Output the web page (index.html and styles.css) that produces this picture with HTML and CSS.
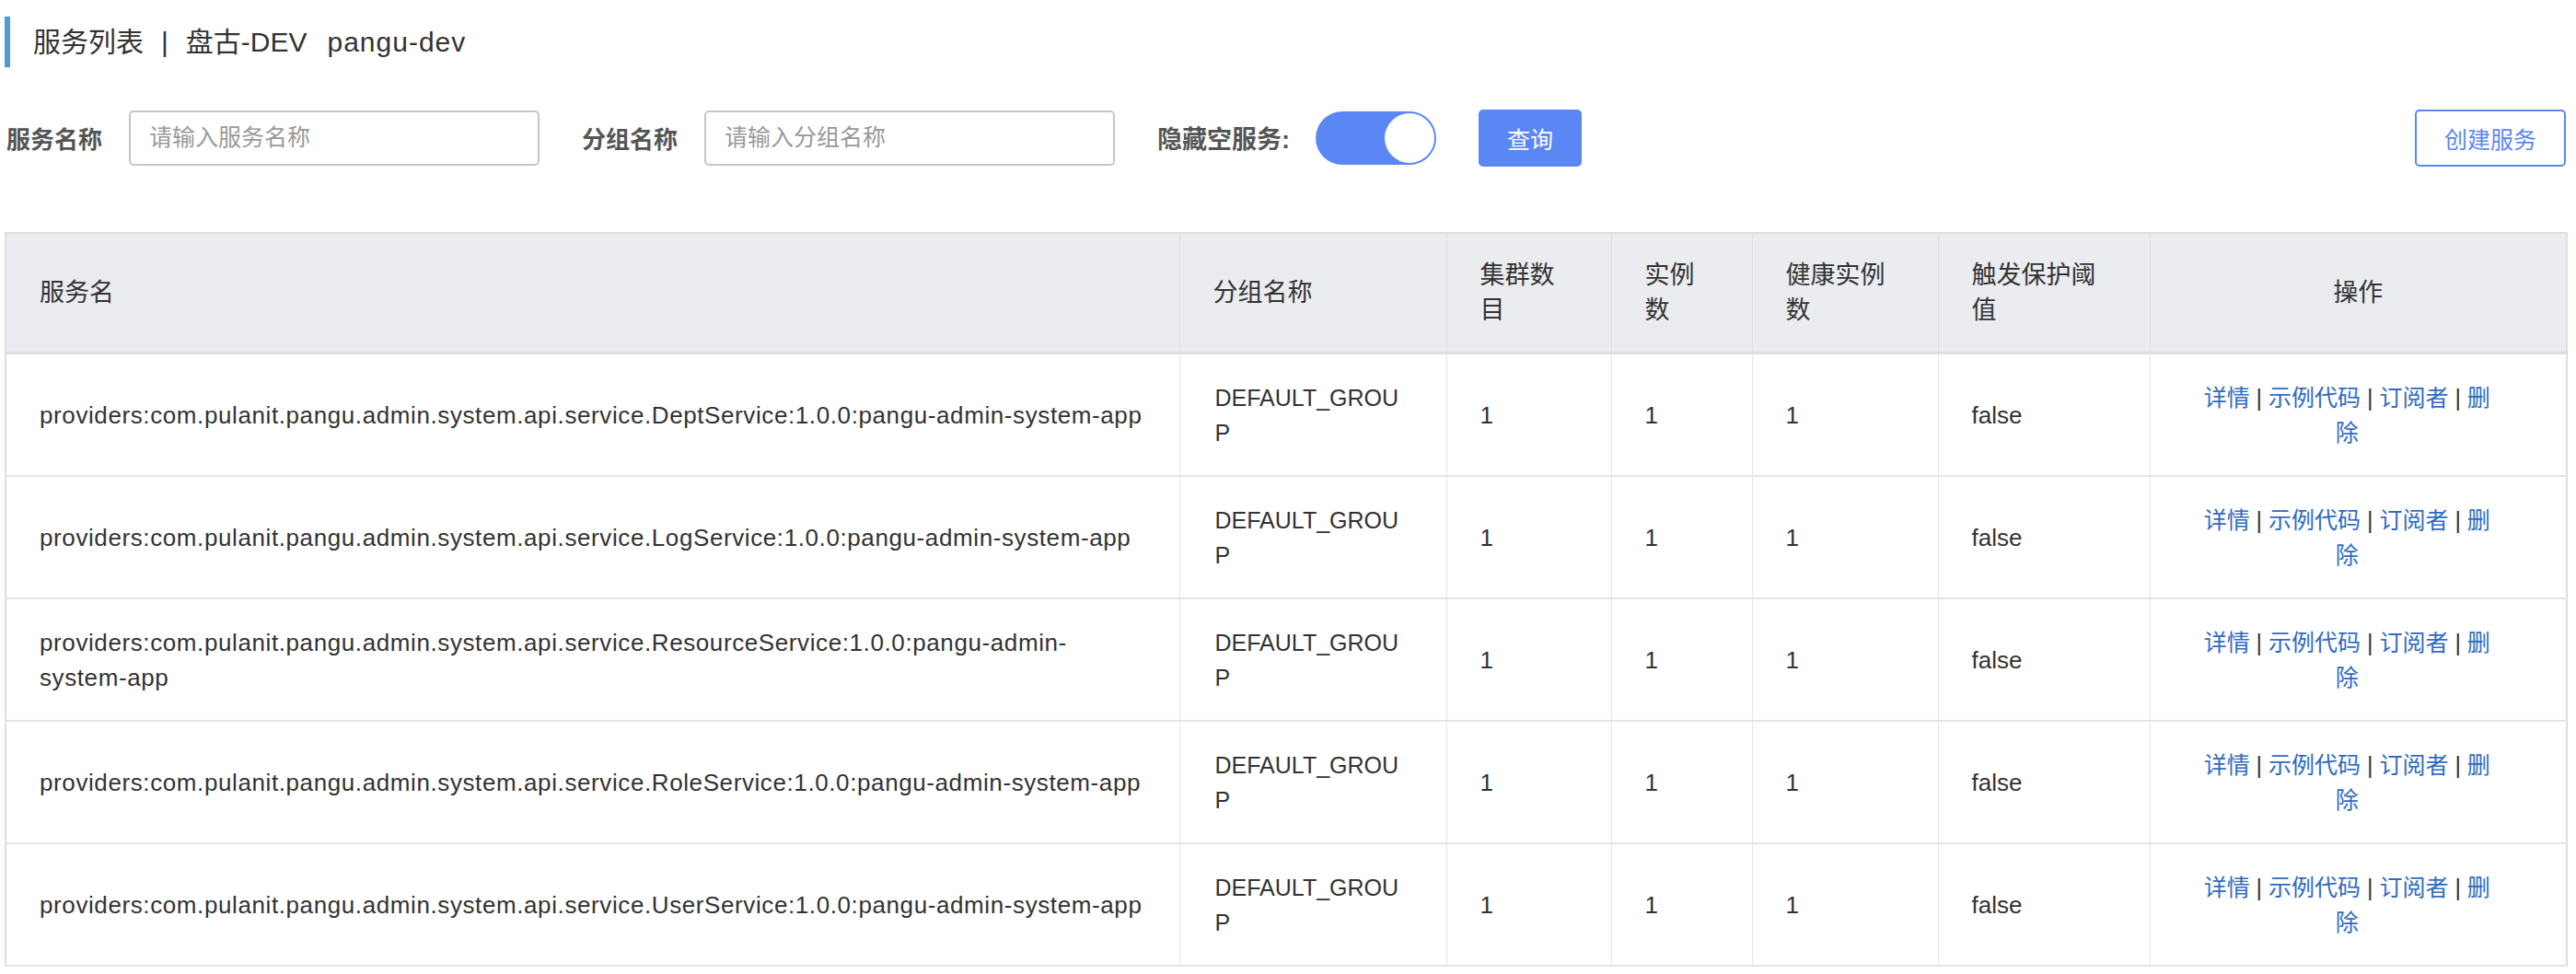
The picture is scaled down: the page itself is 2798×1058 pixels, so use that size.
FILE: index.html
```html
<!DOCTYPE html>
<html lang="zh-CN">
<head>
    <meta charset="UTF-8">
    <title>服务列表</title>
    <link rel="stylesheet" href="styles.css">
</head>
<body>
    <div class="main">
        <div class="page-title">
            <span>服务列表</span><span class="sep">|</span><span>盘古-DEV</span><span class="ns-id">pangu-dev</span>
        </div>

        <div class="filter">
            <div class="field">
                <label>服务名称</label>
                <input type="text" placeholder="请输入服务名称">
            </div>
            <div class="field">
                <label>分组名称</label>
                <input type="text" placeholder="请输入分组名称">
            </div>
            <div class="field field-switch">
                <label>隐藏空服务:</label>
                <span class="switch"><span class="knob"></span></span>
            </div>
            <button class="btn btn-primary">查询</button>
            <button class="btn btn-create">创建服务</button>
        </div>

        <table class="list">
            <colgroup>
                <col class="c-name">
                <col class="c-group">
                <col class="c-cluster">
                <col class="c-ins">
                <col class="c-health">
                <col class="c-protect">
                <col class="c-op">
            </colgroup>
            <thead>
                <tr>
                    <th>服务名</th>
                    <th>分组名称</th>
                    <th>集群数目</th>
                    <th>实例数</th>
                    <th>健康实例数</th>
                    <th>触发保护阈值</th>
                    <th class="op">操作</th>
                </tr>
            </thead>
            <tbody>
                <tr>
                    <td class="name">providers:com.pulanit.pangu.admin.system.api.service.DeptService:1.0.0:pangu-admin-system-app</td>
                    <td class="group">DEFAULT_GROUP</td>
                    <td>1</td><td>1</td><td>1</td><td>false</td>
                    <td class="op"><a>详情</a> | <a>示例代码</a> | <a>订阅者</a> | <a>删除</a></td>
                </tr>
                <tr>
                    <td class="name">providers:com.pulanit.pangu.admin.system.api.service.LogService:1.0.0:pangu-admin-system-app</td>
                    <td class="group">DEFAULT_GROUP</td>
                    <td>1</td><td>1</td><td>1</td><td>false</td>
                    <td class="op"><a>详情</a> | <a>示例代码</a> | <a>订阅者</a> | <a>删除</a></td>
                </tr>
                <tr>
                    <td class="name">providers:com.pulanit.pangu.admin.system.api.service.ResourceService:1.0.0:pangu-admin-system-app</td>
                    <td class="group">DEFAULT_GROUP</td>
                    <td>1</td><td>1</td><td>1</td><td>false</td>
                    <td class="op"><a>详情</a> | <a>示例代码</a> | <a>订阅者</a> | <a>删除</a></td>
                </tr>
                <tr>
                    <td class="name">providers:com.pulanit.pangu.admin.system.api.service.RoleService:1.0.0:pangu-admin-system-app</td>
                    <td class="group">DEFAULT_GROUP</td>
                    <td>1</td><td>1</td><td>1</td><td>false</td>
                    <td class="op"><a>详情</a> | <a>示例代码</a> | <a>订阅者</a> | <a>删除</a></td>
                </tr>
                <tr>
                    <td class="name">providers:com.pulanit.pangu.admin.system.api.service.UserService:1.0.0:pangu-admin-system-app</td>
                    <td class="group">DEFAULT_GROUP</td>
                    <td>1</td><td>1</td><td>1</td><td>false</td>
                    <td class="op"><a>详情</a> | <a>示例代码</a> | <a>订阅者</a> | <a>删除</a></td>
                </tr>
            </tbody>
        </table>
    </div>
</body>
</html>
```

FILE: styles.css
```css
body{
    margin: 0;
    background: #fff;
    color: #333;
    font-family: "Liberation Sans", Arial, "Noto Sans CJK SC", sans-serif;
    font-size: 26px;
}
.main{
    padding: 18px 11px 0 5px;
}
.page-title{
    height: 55px;
    line-height: 55px;
    border-left: 6px solid #4d9bcf;
    padding-left: 25px;
    font-size: 30px;
    color: #333;
}
.page-title .sep{
    margin: 0 19px;
}
.page-title .ns-id{
    margin-left: 22px;
    letter-spacing: 1px;
}
.filter{
    display: flex;
    align-items: center;
    margin-top: 45px;
    height: 63px;
    padding-left: 2px;
}
.field{
    display: flex;
    align-items: center;
    margin-right: 46px;
}
.field label{
    font-weight: bold;
    color: #555;
    margin-right: 29px;
}
.field-switch{
    margin-right: 46px;
}
.field-switch label{
    font-size: 27px;
    margin-right: 28px;
}
.field input{
    box-sizing: border-box;
    width: 446px;
    height: 60px;
    border: 2px solid #c4c6cf;
    border-radius: 5px;
    padding: 0 20px;
    font-family: inherit;
    font-size: 25px;
    color: #333;
    outline: none;
}
.field input::placeholder{
    color: #999;
}
.switch{
    position: relative;
    display: inline-block;
    width: 131px;
    height: 58px;
    border-radius: 29px;
    background: #5b87f5;
}
.switch .knob{
    position: absolute;
    right: 2px;
    top: 2px;
    width: 54px;
    height: 54px;
    border-radius: 50%;
    background: #fff;
}
.btn{
    box-sizing: border-box;
    height: 62px;
    border-radius: 5px;
    font-family: inherit;
    font-size: 25px;
    cursor: pointer;
}
.btn-primary{
    width: 112px;
    border: none;
    background: #5b87f5;
    color: #fff;
}
.btn-create{
    margin-left: auto;
    width: 164px;
    border: 2px solid #5b87f5;
    background: #fff;
    color: #5b87f5;
}
.list{
    margin-top: 71px;
    width: 2782px;
    table-layout: fixed;
    border-collapse: collapse;
    border: 2px solid #dcdee3;
}
.c-name{ width: 1275px; }
.c-group{ width: 290px; }
.c-cluster{ width: 179px; }
.c-ins{ width: 153px; }
.c-health{ width: 202px; }
.c-protect{ width: 230px; }
.c-op{ width: 453px; }
.list th{
    height: 128px;
    background: #ebecf0;
    font-weight: normal;
    font-size: 27px;
    text-align: left;
    line-height: 38px;
    padding: 0 48px 0 36px;
    border-left: 1px solid #dcdee3;
    border-bottom: 3px solid #dcdee3;
    color: #333;
}
.list th.op{
    text-align: center;
    padding: 0 36px;
}
.list td{
    height: 131px;
    line-height: 38px;
    padding: 0 20px 0 36px;
    border-left: 1px solid #e3e4e8;
    border-bottom: 2px solid #e3e4e8;
    color: #333;
}
.list td.name{
    letter-spacing: 0.6px;
    padding-right: 35px;
}
.list td.group{
    font-size: 25px;
    word-break: break-all;
    padding: 0 38px;
}
.list td.op{
    font-size: 25px;
    text-align: center;
    padding: 0 76px 0 52px;
}
.list td.op a{
    color: #2f6bc4;
    cursor: pointer;
}
```
